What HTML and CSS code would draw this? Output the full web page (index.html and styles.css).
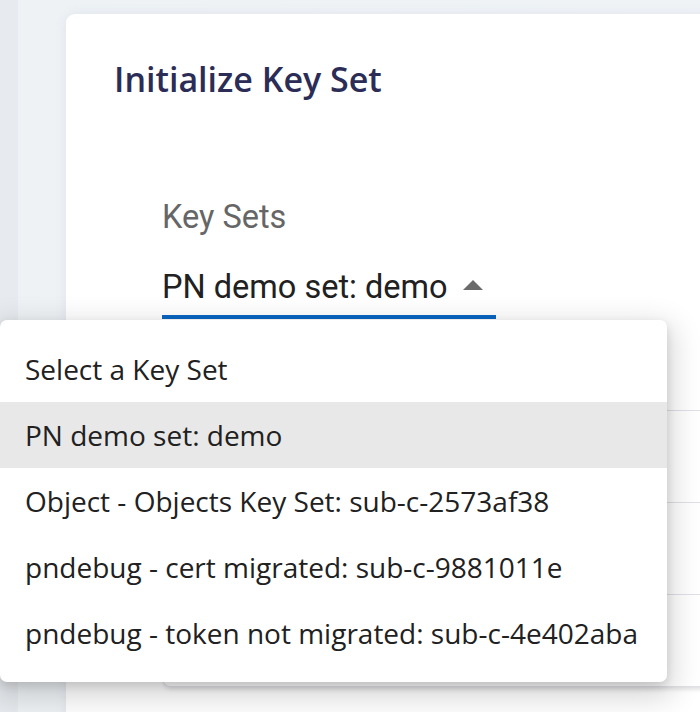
FILE: index.html
```html
<!DOCTYPE html>
<html lang="en">
<head>
<meta charset="utf-8">
<title>Initialize Key Set</title>
<link rel="stylesheet" href="styles.css">
</head>
<body>
<div class="app">
  <div class="rail"></div>
  <div class="main">
    <section class="card">
      <h1 class="title">Initialize Key Set</h1>
      <div class="field">
        <label class="field-label">Key Sets</label>
        <div class="select">
          <span class="select-value">PN demo set: demo</span>
          <svg class="select-arrow" width="20" height="10" viewBox="0 0 20 10"><path d="M0 10 L10 0 L20 10 Z" fill="#6b6b6b"/></svg>
        </div>
      </div>
      <div class="table">
        <div class="table-row table-head"></div>
        <div class="table-row"></div>
        <div class="table-row"></div>
        <div class="table-row"></div>
      </div>
    </section>
  </div>
  <ul class="menu">
    <li class="menu-item">Select a Key Set</li>
    <li class="menu-item is-active">PN demo set: demo</li>
    <li class="menu-item">Object - Objects Key Set: sub-c-2573af38</li>
    <li class="menu-item">pndebug - cert migrated: sub-c-9881011e</li>
    <li class="menu-item">pndebug - token not migrated: sub-c-4e402aba</li>
  </ul>
</div>
</body>
</html>
```

FILE: styles.css
```css
* { box-sizing: border-box; }

html, body {
  margin: 0;
  padding: 0;
  width: 700px;
  height: 712px;
  overflow: hidden;
  background: #eef2f5;
}

.app {
  position: relative;
  display: flex;
  width: 700px;
  height: 712px;
  overflow: hidden;
}

.rail {
  width: 18px;
  flex: none;
  background: #e7eaee;
}

.main {
  flex: 1;
  padding: 14px 0 0 48px;
  background: linear-gradient(90deg, #eef2f5 0%, #f0f3f6 100%);
}

.card {
  width: 700px;
  height: 900px;
  background: #ffffff;
  border-radius: 9px 0 0 0;
  padding: 42px 0 0 48px;
  box-shadow: 0 0 12px rgba(120, 140, 160, 0.12);
}

.title {
  margin: 0;
  font-family: "Open Sans", sans-serif;
  font-weight: 600;
  font-size: 34px;
  line-height: 46px;
  color: #2b2d56;
}

.field {
  margin: 96px 0 0 48px;
  width: 334px;
  display: flex;
  flex-direction: column;
}

.field-label {
  font-family: Roboto, sans-serif;
  font-size: 32.5px;
  line-height: 39px;
  color: #666666;
}

.select {
  margin-top: 31px;
  display: flex;
  align-items: center;
  padding-bottom: 8px;
  border-bottom: 4px solid #0a66c2;
}

.select-value {
  font-family: Roboto, sans-serif;
  font-size: 32.5px;
  line-height: 39px;
  color: #212121;
}

.select-arrow {
  margin-left: 15px;
  margin-top: -6px;
}

.table {
  margin: 20px 0 0 48px;
  border: 1px solid #e0e2e7;
  border-top: none;
  border-right: none;
  border-radius: 0 0 0 8px;
  box-shadow: 0 5px 5px -3px rgba(0, 0, 0, 0.14);
}

.table-row {
  height: 92px;
  border-top: 1px solid #dfe1e6;
}

.table-head {
  height: 72px;
  border-top: none;
  border-bottom: 1px solid #eceef1;
  margin-bottom: -1px;
}

.menu {
  position: absolute;
  left: 0;
  top: 320px;
  width: 667px;
  margin: 0;
  padding: 16px 0;
  list-style: none;
  background: #ffffff;
  border-radius: 7px;
  box-shadow: 0 10px 30px 6px rgba(0, 0, 0, 0.16), 0 4px 10px rgba(0, 0, 0, 0.12);
}

.menu-item {
  height: 66px;
  padding: 0 0 0 25px;
  font-family: "Open Sans", sans-serif;
  font-size: 28px;
  line-height: 66px;
  color: #212121;
  white-space: nowrap;
}

.menu-item.is-active {
  background: #e8e8e8;
}
```
